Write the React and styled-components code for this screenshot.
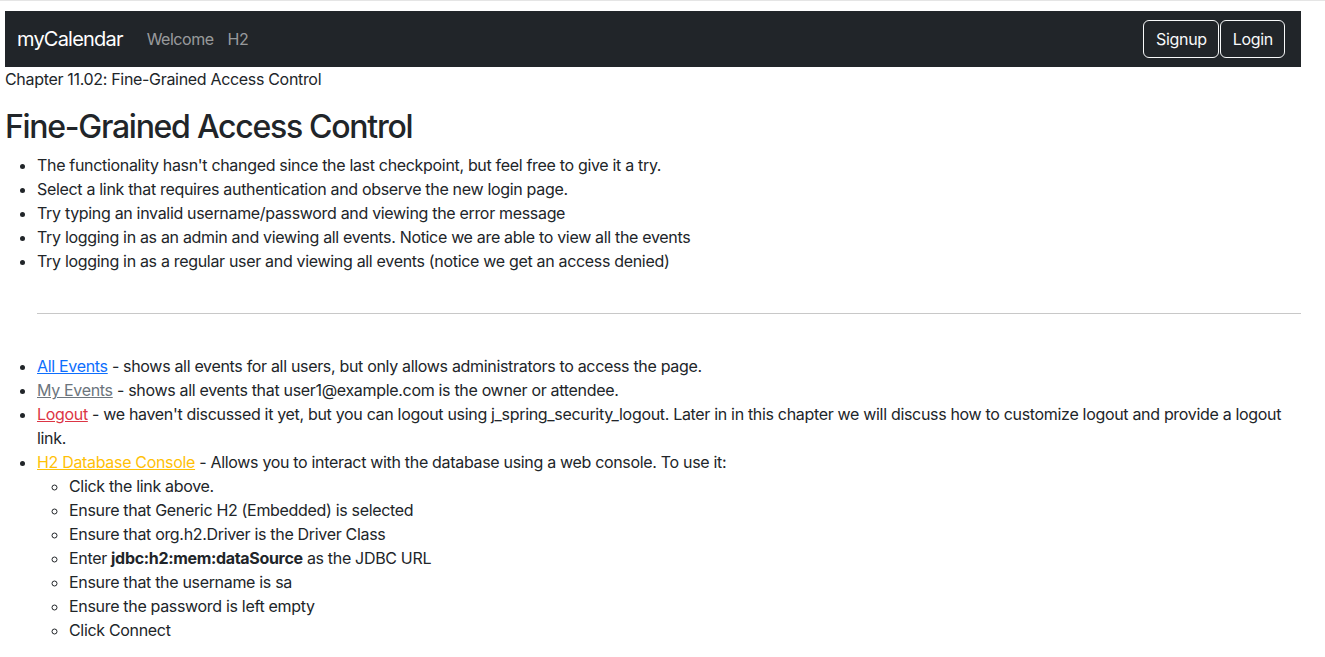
import React from 'react';
import styled, {createGlobalStyle} from 'styled-components';

const GlobalStyle = createGlobalStyle`
  html, body {
    margin: 0;
    padding: 0;
    background: #fff;
  }
  body {
    font-family: Inter, "Noto Sans", "Liberation Sans", sans-serif;
    font-size: 16px;
    line-height: 1.5;
    letter-spacing: -0.02em;
    color: #212529;
    border-top: 1px solid #e5e5e5;
  }
`;

const Page = styled.div`
  padding: 10px 24px 0 5px;
`;

const Navbar = styled.nav`
  display: flex;
  align-items: center;
  justify-content: space-between;
  height: 56px;
  padding: 0 16px 0 12px;
  background: #212529;
`;

const Left = styled.div`
  display: flex;
  align-items: center;
`;

const Brand = styled.a`
  font-size: 20px;
  letter-spacing: -0.04em;
  color: #fff;
  text-decoration: none;
  margin-right: 17px;
`;

const NavLink = styled.a`
  color: rgba(255, 255, 255, 0.55);
  text-decoration: none;
  letter-spacing: -0.03em;
  padding: 8px 7px;
`;

const Buttons = styled.div`
  display: flex;
  gap: 1px;
`;

const OutlineButton = styled.button`
  font-family: inherit;
  font-size: 16px;
  line-height: 1.5;
  letter-spacing: -0.02em;
  color: #f8f9fa;
  background: transparent;
  border: 1px solid #f8f9fa;
  border-radius: 6px;
  padding: 6px 11px 6px 12px;
  height: 38px;
`;

const Crumb = styled.div`
  line-height: 24px;
`;

const Title = styled.h2`
  font-size: 32px;
  font-weight: 500;
  letter-spacing: -0.04em;
  line-height: 1.2;
  margin: 17px 0 7px;
`;

const List = styled.ul`
  list-style: disc;
  margin: 0;
  padding-left: 32px;
`;

const SubList = styled.ul`
  list-style: circle;
  margin: 0;
  padding-left: 32px;
`;

const Divider = styled.div`
  padding-left: 32px;
  margin: 40px 0;

  hr {
    margin: 0;
    border: 0;
    border-top: 1px solid #c8c8c8;
  }
`;

const Link = styled.a`
  color: ${p => p.$color};
  text-decoration: underline;
`;

const steps = [
  'Click the link above.',
  'Ensure that Generic H2 (Embedded) is selected',
  'Ensure that org.h2.Driver is the Driver Class',
  null,
  'Ensure that the username is sa',
  'Ensure the password is left empty',
  'Click Connect',
];

export default function App() {
  return (
    <Page>
      <GlobalStyle />
      <Navbar>
        <Left>
          <Brand href="#">myCalendar</Brand>
          <NavLink href="#">Welcome</NavLink>
          <NavLink href="#">H2</NavLink>
        </Left>
        <Buttons>
          <OutlineButton>Signup</OutlineButton>
          <OutlineButton>Login</OutlineButton>
        </Buttons>
      </Navbar>
      <Crumb>Chapter 11.02: Fine-Grained Access Control</Crumb>
      <Title>Fine-Grained Access Control</Title>
      <List>
        <li>The functionality hasn't changed since the last checkpoint, but feel free to give it a try.</li>
        <li>Select a link that requires authentication and observe the new login page.</li>
        <li>Try typing an invalid username/password and viewing the error message</li>
        <li>Try logging in as an admin and viewing all events. Notice we are able to view all the events</li>
        <li>Try logging in as a regular user and viewing all events (notice we get an access denied)</li>
      </List>
      <Divider><hr /></Divider>
      <List>
        <li><Link href="#" $color="#0d6efd">All Events</Link> - shows all events for all users, but only allows administrators to access the page.</li>
        <li><Link href="#" $color="#6c757d">My Events</Link> - shows all events that user1@example.com is the owner or attendee.</li>
        <li><Link href="#" $color="#dc3545">Logout</Link> - we haven't discussed it yet, but you can logout using j_spring_security_logout. Later in in this chapter we will discuss how to customize logout and provide a logout link.</li>
        <li>
          <Link href="#" $color="#ffc107">H2 Database Console</Link> - Allows you to interact with the database using a web console. To use it:
          <SubList>
            {steps.map((s, i) =>
              s ? <li key={i}>{s}</li> : <li key={i}>Enter <b>jdbc:h2:mem:dataSource</b> as the JDBC URL</li>
            )}
          </SubList>
        </li>
      </List>
    </Page>
  );
}
